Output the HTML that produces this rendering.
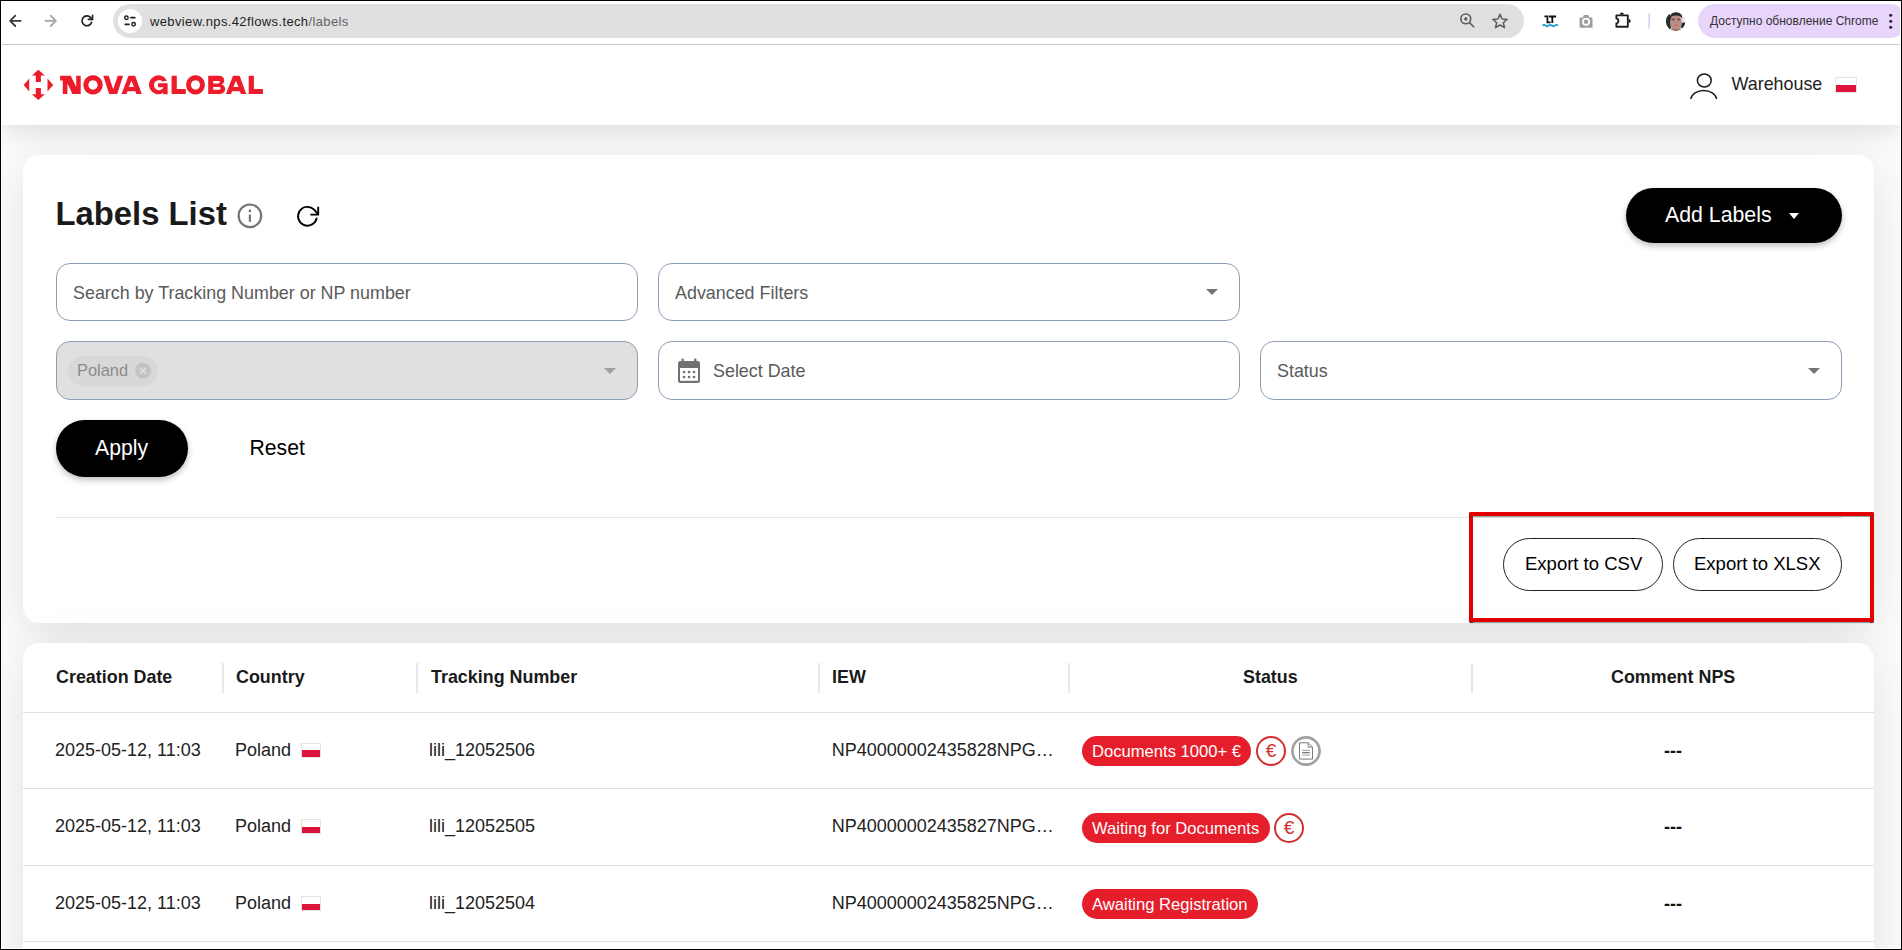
<!DOCTYPE html>
<html><head><meta charset="utf-8">
<style>
*{box-sizing:border-box;margin:0;padding:0}
html,body{width:1902px;height:950px;overflow:hidden;background:#000;font-family:"Liberation Sans",sans-serif}
#frame{position:absolute;left:1px;top:1px;width:1900px;height:948px;background:#fff}
#vp{position:absolute;left:2px;top:2px;width:1898px;height:946px;background:#fcfcfc;overflow:hidden}
#pg{position:absolute;left:-2px;top:-2px;width:1902px;height:950px}
.a{position:absolute;white-space:nowrap}
.t{position:absolute;white-space:nowrap;line-height:1}
svg{position:absolute;overflow:visible}
#tb{position:absolute;left:2px;top:2px;width:1898px;height:43px;background:#fff;border-bottom:1px solid #c7cac9}
#omni{position:absolute;left:113px;top:4px;width:1411px;height:34px;border-radius:17px;background:#e0e0e0}
#site{position:absolute;left:118px;top:9px;width:24px;height:24px;border-radius:12px;background:#fff}
#upd{position:absolute;left:1698px;top:4px;width:209px;height:34px;border-radius:17px;background:#e8d5fb}
#hdr{position:absolute;left:2px;top:45px;width:1898px;height:80px;background:#fff;box-shadow:0 4px 30px rgba(0,0,0,.15)}
.card{position:absolute;background:#fff;border-radius:16px;box-shadow:0 10px 50px rgba(0,0,0,.11)}
.inp{position:absolute;border:1px solid #8c9db5;border-radius:14px;background:#fff}
.pill{position:absolute;border-radius:40px}
.caret{position:absolute;width:0;height:0;border-left:6px solid transparent;border-right:6px solid transparent;border-top:6px solid #757575}
.sep{position:absolute;width:2px;height:30px;background:#e8e8e8}
.hl{position:absolute;left:23px;width:1851px;height:1px;background:#e0e0e0}
.th{font-weight:bold;font-size:17.9px;color:#1a1a1a}
.td{font-size:18px;color:#222}
.ph{font-size:17.9px;color:#5a5a5a}
.flag{position:absolute;width:20px;height:15px;border:1px solid #e3e3e3;background:linear-gradient(#fff 0,#fff 50%,#dc143c 50%,#dc143c 100%)}
.badge{position:absolute;height:30px;border-radius:15px;background:#e61e2b;color:#fff;font-size:16.6px;line-height:32px;padding:0 10.5px 0 10px;white-space:nowrap}
.circ{position:absolute;width:30px;height:30px;border-radius:15px}
.dash{position:absolute;font-weight:bold;font-size:18px;line-height:1;color:#111;margin-top:1px}
</style></head><body>
<div id="frame"></div>
<div id="vp"><div id="pg">

<!-- App header -->
<div id="hdr"></div>
<!-- Chrome toolbar -->
<div id="tb"></div>
<svg style="left:0;top:0" width="1902" height="45" viewBox="0 0 1902 45">
  <!-- back -->
  <path d="M20.6 20.8H10.4M15.3 15.6L10.1 20.8L15.3 26" fill="none" stroke="#3a3a3a" stroke-width="1.8" stroke-linecap="round" stroke-linejoin="round"/>
  <!-- forward -->
  <path d="M45.4 20.8H55.6M50.7 15.6L55.9 20.8L50.7 26" fill="none" stroke="#a6a6a6" stroke-width="1.8" stroke-linecap="round" stroke-linejoin="round"/>
  <!-- reload -->
  <path d="M91.6 22.3A4.9 4.9 0 1 1 90.6 17.6L92.3 19.3" fill="none" stroke="#202124" stroke-width="1.7" stroke-linecap="round"/>
  <path d="M92.5 15.4V19.4H88.4" fill="none" stroke="#202124" stroke-width="1.7" stroke-linecap="round" stroke-linejoin="round"/>
</svg>
<div id="omni"></div>
<div id="site"></div>
<svg style="left:0;top:0" width="1902" height="45" viewBox="0 0 1902 45">
  <g fill="none" stroke="#1f1f1f" stroke-width="1.4">
    <circle cx="126.4" cy="17.7" r="1.75"/><path d="M130.9 17.7h3.9M125.3 24.3h3.7" stroke-linecap="round" stroke-width="1.7"/><circle cx="133.6" cy="24.3" r="1.75"/>
  </g>
  <!-- zoom -->
  <g fill="none" stroke="#5c5c5c" stroke-width="1.6">
    <circle cx="1465.8" cy="18.9" r="4.9"/><path d="M1469.5 22.6l4.6 4.6"/>
  </g>
  <path d="M1465.8 17.1v3.6M1464 18.9h3.6" stroke="#5c5c5c" stroke-width="1.5"/>
  <!-- star -->
  <path d="M1500 14.3l2.1 4.7 5 .4-3.8 3.4 1.2 4.9-4.5-2.7-4.5 2.7 1.2-4.9-3.8-3.4 5-.4z" fill="none" stroke="#5c5c5c" stroke-width="1.5" stroke-linejoin="round"/>
  <!-- LT -->
  <path d="M1544.4 16.3H1547.4V22.4H1550.6" fill="none" stroke="#111" stroke-width="1.7"/>
  <path d="M1548.8 16.5H1556.1M1552.3 16.5V22.9" fill="none" stroke="#111" stroke-width="1.8"/>
  <path d="M1542.5 25.6q1.6-1.4 3.1 0t3.1 0 3.1 0 3.1 0 3.1 0" fill="none" stroke="#1b9ad8" stroke-width="1.6"/>
  <!-- camera -->
  <path d="M1579.6 18.5a.9.9 0 0 1 .9-.9h2.4l.9-2.6h4.6l.9 2.6h2.3a.9.9 0 0 1 .9.9v8.4a.9.9 0 0 1-.9.9h-11.1a.9.9 0 0 1-.9-.9z" fill="#9e9e9e"/>
  <circle cx="1586" cy="21.8" r="4" fill="#fff"/><circle cx="1586" cy="21.8" r="2.2" fill="#9e9e9e"/>
  <!-- puzzle -->
  <path d="M1616.4 15.4H1627.8V26.8H1616.4V23.4A2 2.4 0 0 0 1616.4 18.6Z" fill="none" stroke="#1f1f1f" stroke-width="1.9" stroke-linejoin="round"/>
  <path d="M1619.7 14.6A2.1 2 0 0 1 1623.9 14.6Z" fill="#1f1f1f"/>
  <path d="M1628.6 18.9A2.1 2.1 0 0 1 1628.6 23.1Z" fill="#1f1f1f"/>
  <!-- separator -->
  <rect x="1648.5" y="13" width="1.3" height="15.7" fill="#d7c3f3"/>
  <!-- avatar -->
  <defs><clipPath id="avc"><circle cx="1675.6" cy="21.4" r="9.7"/></clipPath></defs>
  <g clip-path="url(#avc)">
    <rect x="1665" y="11" width="22" height="22" fill="#e9ecef"/>
    <ellipse cx="1668.5" cy="22" rx="3.6" ry="8" fill="#25302a"/>
    <ellipse cx="1684" cy="25.5" rx="3.5" ry="3" fill="#1f2a24"/>
    <ellipse cx="1676" cy="23" rx="6" ry="8" fill="#b98e82"/>
    <path d="M1669.6 19.5Q1669.5 12.5 1676 12.3Q1682.5 12.5 1682.3 19Q1681 15.8 1676 15.6Q1671 15.8 1669.6 19.5Z" fill="#2a2426"/>
    <ellipse cx="1673.2" cy="19.6" rx="1.6" ry="1" fill="#7a4740"/>
    <ellipse cx="1678.6" cy="19.6" rx="1.6" ry="1" fill="#7a4740"/>
    <ellipse cx="1675.8" cy="25.2" rx="1.8" ry=".8" fill="#b9646a"/>
    <rect x="1671" y="29" width="10" height="4" fill="#9a7266"/>
  </g>
  <!-- dots -->
  <g fill="#1f1f1f"><circle cx="1890.7" cy="15.3" r="1.5"/><circle cx="1890.7" cy="21.3" r="1.5"/><circle cx="1890.7" cy="27.3" r="1.5"/></g>
</svg>
<div class="t" style="left:150px;top:15px;font-size:13px;letter-spacing:.37px;color:#1f1f1f">webview.nps.42flows.tech<span style="color:#5f6368">/labels</span></div>
<div id="upd"></div>
<div class="t" style="left:1710px;top:15px;font-size:12px;color:#333">Доступно обновление Chrome</div>
<svg style="left:0;top:0" width="1902" height="45" viewBox="0 0 1902 45">
  <g fill="#1f1f1f"><circle cx="1890.7" cy="15.3" r="1.5"/><circle cx="1890.7" cy="21.3" r="1.5"/><circle cx="1890.7" cy="27.3" r="1.5"/></g>
</svg>

<svg style="left:0;top:45px" width="300" height="80" viewBox="0 45 300 80">
  <g fill="#ec1c2a">
    <path d="M38.3 69.8L44.8 75.6H40.9V82H35.8V75.6H31.9Z"/>
    <path d="M38.3 100L44.8 94.2H40.9V87.9H35.8V94.2H31.9Z"/>
    <path d="M23.7 84.9L29.2 78.4V91.4Z"/>
    <path d="M53.2 84.9L47.5 78.4V91.4Z"/>
    <!-- N -->
    <path d="M60.1 75.8H70.8L76.2 87V75.8H80.7V94H72.4L67.4 83.2V94H62.8V80.6H60.1Z"/>
    <!-- O -->
    <path fill-rule="evenodd" d="M93 75.3a9.7 9.6 0 1 0 0.01 0ZM93 80.2a4.6 4.7 0 1 1-.01 0Z"/>
    <!-- V -->
    <path d="M103.3 75.8H108.7L113.2 89.2L117.8 75.8H123.1L117.2 94H109.1Z"/>
    <!-- A -->
    <path fill-rule="evenodd" d="M128.5 75.8H135.1L141.8 94H136.4L135.4 91.2H127.5L126.6 94H121.5ZM131.4 80.7L133.9 87H128.9Z"/>
    <!-- G -->
    <path d="M166.9 80.7A9.45 9.45 0 1 0 163.1 93.03L163.6 94.2H167.6V83.3H158.1V87.2H163.5A5 5 0 1 1 162.4 81.5Z"/>
    <!-- L -->
    <path d="M171.6 75.8H176.8V88.9H185.8V94H171.6Z"/>
    <!-- O -->
    <path fill-rule="evenodd" d="M195.5 75.3a9.4 9.6 0 1 0 0.01 0ZM195.5 80.2a4.5 4.7 0 1 1-.01 0Z"/>
    <!-- B -->
    <path fill-rule="evenodd" d="M208.2 75.8H218.3C222.3 75.8 224.2 77.8 224.2 80.4C224.2 82.3 223.3 83.6 221.8 84.4C223.9 85.1 225.1 86.8 225.1 89C225.1 92.2 222.7 94 218.6 94H208.2ZM213.2 80.9V83.4H218.4C219.3 83.4 219.8 82.9 219.8 82.1C219.8 81.4 219.3 80.9 218.4 80.9ZM213.2 87V89.8H218.9C219.9 89.8 220.5 89.3 220.5 88.4C220.5 87.5 219.9 87 218.9 87Z"/>
    <!-- A -->
    <path fill-rule="evenodd" d="M233 75.8H239.6L246.3 94H240.9L239.9 91.2H232L231.1 94H226ZM235.9 80.7L238.4 87H233.4Z"/>
    <!-- L -->
    <path d="M248.7 75.8H253.9V88.9H262.9V94H248.7Z"/>
  </g>
</svg>
<svg style="left:0;top:45px" width="1902" height="80" viewBox="0 45 1902 80">
  <g fill="none" stroke="#1a1a1a" stroke-width="1.5">
    <ellipse cx="1704.3" cy="80.5" rx="6.9" ry="6.5"/>
    <path d="M1690.8 99a13 9.8 0 0 1 25.8 0"/>
  </g>
</svg>
<div class="t" style="left:1731.5px;top:76px;font-size:17.9px;color:#222">Warehouse</div>
<div class="flag" style="left:1835px;top:77px;width:22px;height:16px"></div>

<!-- Filters card -->
<div class="card" style="left:23px;top:155px;width:1851px;height:468px"></div>
<div class="t" style="left:55.5px;top:197.5px;font-size:32.8px;font-weight:bold;color:#1a1a1a">Labels List</div>
<svg style="left:230px;top:195px" width="100" height="40" viewBox="230 195 100 40">
  <circle cx="249.9" cy="215.8" r="11.3" fill="none" stroke="#747474" stroke-width="2.2"/>
  <circle cx="249.9" cy="210.9" r="1.3" fill="#747474"/>
  <rect x="248.8" y="214.6" width="2.2" height="7.2" fill="#747474"/>
  <path d="M316.6 218.5A9.4 9.4 0 1 1 314.15 209.65L318.2 214.3" fill="none" stroke="#000" stroke-width="1.9" stroke-linecap="round" stroke-linejoin="round"/>
  <path d="M318.2 207.5V214.6H311.1" fill="none" stroke="#000" stroke-width="1.9" stroke-linecap="round" stroke-linejoin="round"/>
</svg>

<div class="inp" style="left:56px;top:263px;width:582px;height:58px"></div>
<div class="t ph" style="left:73px;top:285px">Search by Tracking Number or NP number</div>
<div class="inp" style="left:658px;top:263px;width:582px;height:58px"></div>
<div class="t ph" style="left:675px;top:285px">Advanced Filters</div>
<div class="caret" style="left:1206px;top:289px"></div>

<div class="inp" style="left:56px;top:341px;width:582px;height:59px;background:#e0e0e0"></div>
<div class="pill" style="left:68px;top:356px;width:90px;height:30px;background:#d8d8d8"></div>
<div class="t" style="left:77px;top:362.2px;font-size:16.4px;color:#8a8a8a">Poland</div>
<svg style="left:130px;top:358px" width="30" height="30" viewBox="130 358 30 30">
  <circle cx="143" cy="370.8" r="8" fill="#c3c3c3"/>
  <path d="M140 367.8l6 6M146 367.8l-6 6" stroke="#e0e0e0" stroke-width="1.6"/>
</svg>
<div class="caret" style="left:604px;top:368px;border-top-color:#a0a0a0"></div>
<div class="inp" style="left:658px;top:341px;width:582px;height:59px"></div>
<svg style="left:670px;top:352px" width="40" height="40" viewBox="670 352 40 40">
  <rect x="678" y="361" width="22" height="22" rx="2.2" fill="#717171"/>
  <rect x="680" y="368" width="18" height="12.8" fill="#fff"/>
  <rect x="681.6" y="358.4" width="2.3" height="4" rx="1" fill="#717171"/>
  <rect x="694.1" y="358.4" width="2.3" height="4" rx="1" fill="#717171"/>
  <g fill="#717171"><rect x="682.9" y="370.9" width="2.3" height="2.3"/><rect x="687.9" y="370.9" width="2.3" height="2.3"/><rect x="692.9" y="370.9" width="2.3" height="2.3"/><rect x="682.9" y="375.9" width="2.3" height="2.3"/><rect x="687.9" y="375.9" width="2.3" height="2.3"/><rect x="692.9" y="375.9" width="2.3" height="2.3"/></g>
</svg>
<div class="t ph" style="left:713px;top:362.5px">Select Date</div>
<div class="inp" style="left:1260px;top:341px;width:582px;height:59px"></div>
<div class="t ph" style="left:1277px;top:362.5px">Status</div>
<div class="caret" style="left:1808px;top:368px"></div>

<div class="pill" style="left:56px;top:420px;width:132px;height:57px;background:#000;box-shadow:0 3px 6px rgba(0,0,0,.25)"></div>
<div class="t" style="left:95px;top:436.5px;font-size:21.2px;color:#fff">Apply</div>
<div class="t" style="left:249.5px;top:436.5px;font-size:21.2px;color:#000">Reset</div>

<div class="pill" style="left:1626px;top:188px;width:216px;height:55px;background:#000;box-shadow:0 3px 6px rgba(0,0,0,.25)"></div>
<div class="t" style="left:1665px;top:205px;font-size:21.3px;color:#fff">Add Labels</div>
<div class="caret" style="left:1789px;top:213px;border-top-color:#fff;border-left-width:5.75px;border-right-width:5.75px"></div>

<div class="a" style="left:56px;top:517px;width:1786px;height:1px;background:#e5e5e5"></div>
<div class="pill" style="left:1503px;top:538px;width:160px;height:53px;border:1px solid #222;background:#fff"></div>
<div class="t" style="left:1525px;top:555px;font-size:18.5px;color:#000">Export to CSV</div>
<div class="pill" style="left:1673px;top:538px;width:169px;height:53px;border:1px solid #222;background:#fff"></div>
<div class="t" style="left:1694px;top:555px;font-size:18.5px;color:#000">Export to XLSX</div>
<div class="a" style="left:1469px;top:512px;width:4px;height:111px;background:#e20000;border-radius:2px 0 0 2px"></div>
<div class="a" style="left:1870px;top:512px;width:4px;height:111px;background:#e20000;border-radius:0 2px 2px 0"></div>
<div class="a" style="left:1469px;top:512px;width:405px;height:4px;background:#e20000;border-radius:2px 2px 0 0;box-shadow:0 1px 1px rgba(40,75,75,.55)"></div>
<div class="a" style="left:1469px;top:618px;width:405px;height:4px;background:#e20000;border-radius:0 0 2px 2px;box-shadow:0 1px 1px rgba(40,75,75,.55)"></div>

<!-- Table card -->
<div class="card" style="left:23px;top:643px;width:1851px;height:400px"></div>
<div class="t th" style="left:56px;top:669px">Creation Date</div>
<div class="sep" style="left:222px;top:663px"></div>
<div class="t th" style="left:236px;top:669px">Country</div>
<div class="sep" style="left:416px;top:663px"></div>
<div class="t th" style="left:431px;top:669px">Tracking Number</div>
<div class="sep" style="left:818px;top:663px"></div>
<div class="t th" style="left:832px;top:669px">IEW</div>
<div class="sep" style="left:1068px;top:663px"></div>
<div class="t th" style="left:1243px;top:669px">Status</div>
<div class="sep" style="left:1471px;top:663px"></div>
<div class="t th" style="left:1611px;top:669px">Comment NPS</div>
<div class="hl" style="top:712px"></div>
<div class="hl" style="top:788px"></div>
<div class="hl" style="top:865px"></div>
<div class="hl" style="top:941px"></div>

<!-- row 1 -->
<div class="t td" style="left:55px;top:741px">2025-05-12, 11:03</div>
<div class="t td" style="left:235px;top:741px">Poland</div>
<div class="flag" style="left:301px;top:743px"></div>
<div class="t td" style="left:429px;top:741px">lili_12052506</div>
<div class="t td" style="left:831.7px;top:741px">NP40000002435828NPG…</div>
<div class="badge" style="left:1082px;top:736px">Documents 1000+ €</div>
<div class="circ" style="left:1256px;top:736px;border:2.4px solid #d32f2f;color:#d32f2f;font-size:19px;line-height:25.5px;text-align:center">€</div>
<svg style="left:1290px;top:735px" width="32" height="32" viewBox="1290 735 32 32">
  <circle cx="1306" cy="751" r="13.6" fill="#fff" stroke="#a0a0a0" stroke-width="2.6"/>
  <path d="M1299.5 742.8H1308.2L1312.5 747.1V759.1H1299.5Z" fill="none" stroke="#7a7a7a" stroke-width="1"/>
  <path d="M1308.2 742.8V747.1H1312.5" fill="none" stroke="#7a7a7a" stroke-width="1"/>
  <path d="M1302.2 750.4H1309.8M1302.2 755H1309.8" stroke="#9a9a9a" stroke-width="1"/><path d="M1302.2 752.7H1309.8" stroke="#555" stroke-width="1"/>
</svg>
<div class="dash" style="left:1664px;top:741px">---</div>

<!-- row 2 -->
<div class="t td" style="left:55px;top:817px">2025-05-12, 11:03</div>
<div class="t td" style="left:235px;top:817px">Poland</div>
<div class="flag" style="left:301px;top:819px"></div>
<div class="t td" style="left:429px;top:817px">lili_12052505</div>
<div class="t td" style="left:831.7px;top:817px">NP40000002435827NPG…</div>
<div class="badge" style="left:1082px;top:813px">Waiting for Documents</div>
<div class="circ" style="left:1274px;top:813px;border:2.4px solid #d32f2f;color:#d32f2f;font-size:19px;line-height:25.5px;text-align:center">€</div>
<div class="dash" style="left:1664px;top:817px">---</div>

<!-- row 3 -->
<div class="t td" style="left:55px;top:894px">2025-05-12, 11:03</div>
<div class="t td" style="left:235px;top:894px">Poland</div>
<div class="flag" style="left:301px;top:896px"></div>
<div class="t td" style="left:429px;top:894px">lili_12052504</div>
<div class="t td" style="left:831.7px;top:894px">NP40000002435825NPG…</div>
<div class="badge" style="left:1082px;top:889px">Awaiting Registration</div>
<div class="dash" style="left:1664px;top:894px">---</div>

</div></div>
</body></html>
